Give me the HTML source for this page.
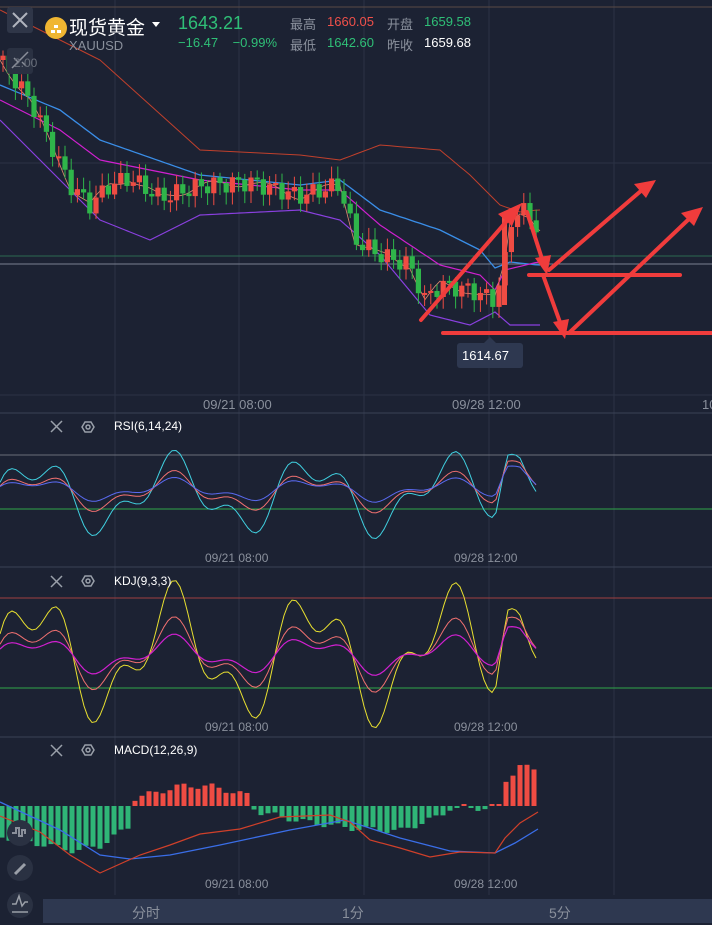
<!DOCTYPE html>
<html><head><meta charset="utf-8">
<style>
*{margin:0;padding:0;box-sizing:border-box}
body{width:712px;height:925px;background:#1c2233;overflow:hidden;position:relative;font-family:"Liberation Sans","Noto Sans CJK SC",sans-serif}
svg{position:absolute;left:0;top:0}
.t{position:absolute;white-space:nowrap}
</style></head><body>
<svg id="s" width="712" height="925" viewBox="0 0 712 925">
<rect width="712" height="925" fill="#1c2233"/>
<g stroke="#2b3245" stroke-width="1">
<line x1="115" y1="0" x2="115" y2="895"/><line x1="239" y1="0" x2="239" y2="895"/>
<line x1="364" y1="0" x2="364" y2="895"/><line x1="489" y1="0" x2="489" y2="895"/>
<line x1="614" y1="0" x2="614" y2="895"/>
<line x1="0" y1="7" x2="712" y2="7" stroke="#5a4a45"/>
<line x1="0" y1="163" x2="712" y2="163"/>
<line x1="0" y1="395" x2="712" y2="395"/>
<line x1="0" y1="413" x2="712" y2="413" stroke="#3a4256"/>
<line x1="0" y1="567" x2="712" y2="567" stroke="#3a4256"/>
<line x1="0" y1="737" x2="712" y2="737" stroke="#3a4256"/>
</g>
<line x1="0" y1="256" x2="712" y2="256" stroke="#2d6a52"/>
<line x1="0" y1="264" x2="712" y2="264" stroke="#7a8090"/>
<line x1="0" y1="455" x2="712" y2="455" stroke="#6a6e7a"/>
<line x1="0" y1="509" x2="712" y2="509" stroke="#2fa54a"/>
<line x1="0" y1="598" x2="712" y2="598" stroke="#a04040"/>
<line x1="0" y1="688" x2="712" y2="688" stroke="#2fa54a"/>
<g id="dyn"></g>
<g stroke="#f03c3c" stroke-width="4" fill="#f03c3c" stroke-linecap="round">
<line x1="421" y1="320" x2="512" y2="215"/><polygon points="522,203 498,214 512,226" stroke="none"/>
<line x1="527" y1="212" x2="543" y2="262"/><polygon points="547,275 535,258 551,255" stroke="none"/>
<line x1="549" y1="270" x2="642" y2="190"/><polygon points="656,180 634,184 646,198" stroke="none"/>
<line x1="529" y1="275" x2="680" y2="275"/>
<line x1="543" y1="275" x2="561" y2="325"/><polygon points="565,339 553,322 569,319" stroke="none"/>
<line x1="443" y1="333" x2="712" y2="333"/>
<line x1="569" y1="333" x2="690" y2="218"/><polygon points="703,207 681,213 694,226" stroke="none"/>
</g>
<rect x="457" y="343" width="66" height="25" rx="3" fill="#2e3850"/>
<polygon points="484,343 490,337 496,343" fill="#2e3850"/>
<rect x="7" y="7" width="26" height="26" rx="3" fill="#2f3648"/>
<path d="M13 13L27 27M27 13L13 27" stroke="#b0b4bd" stroke-width="2"/>
<rect x="7" y="48" width="26" height="26" rx="3" fill="#2a3142"/>
<path d="M12 68L28 52M14 58l4 4M22 62l4 4" stroke="#8a8f9a" stroke-width="1.5"/>
<circle cx="20" cy="833" r="13" fill="#2a3142"/><circle cx="20" cy="868" r="13" fill="#2a3142"/><circle cx="20" cy="905" r="13" fill="#2a3142"/>
<path d="M12 833h4v-5h3v8h3v-6h3v4" stroke="#8a8f9a" stroke-width="2" fill="none"/>
<path d="M15 874l10-10" stroke="#9a9fa8" stroke-width="3"/>
<path d="M12 904l4 0l3-8l3 10l3-4h3M12 912h16" stroke="#9a9fa8" stroke-width="1.5" fill="none"/>
<rect x="43" y="899" width="669" height="24" fill="#2e3850"/>
<g stroke="#9aa0aa" stroke-width="1.5" fill="none">
<path d="M51 421l11 11M62 421l-11 11"/><path d="M51 576l11 11M62 576l-11 11"/><path d="M51 745l11 11M62 745l-11 11"/>
<polygon points="82,427 85,422 91,422 94,427 91,432 85,432"/><circle cx="88" cy="427" r="2"/>
<polygon points="82,581 85,576 91,576 94,581 91,586 85,586"/><circle cx="88" cy="581" r="2"/>
<polygon points="82,750 85,745 91,745 94,750 91,755 85,755"/><circle cx="88" cy="750" r="2"/>
</g>
<circle cx="56" cy="28" r="11" fill="#f0b632"/>
<path d="M51 30h4v3h-4zM57 30h4v3h-4zM54 25h4v3h-4z" fill="#fff"/>
<polygon points="152,22 160,22 156,27" fill="#fff"/>
</svg>
<div class="t" style="left:69px;top:13px;font-size:19px;color:#fff">现货黄金</div>
<div class="t" style="left:69px;top:38px;font-size:13px;color:#8a909c">XAUUSD</div>
<div class="t" style="left:178px;top:13px;font-size:18px;color:#2fbf77">1643.21</div>
<div class="t" style="left:178px;top:35px;font-size:13px;color:#2fbf77">−16.47 &nbsp;&nbsp; −0.99%</div>
<div class="t" style="left:290px;top:14px;font-size:13px;color:#8a909c">最高</div>
<div class="t" style="left:327px;top:14px;font-size:13px;color:#f0504a">1660.05</div>
<div class="t" style="left:387px;top:14px;font-size:13px;color:#8a909c">开盘</div>
<div class="t" style="left:424px;top:14px;font-size:13px;color:#2fbf77">1659.58</div>
<div class="t" style="left:290px;top:35px;font-size:13px;color:#8a909c">最低</div>
<div class="t" style="left:327px;top:35px;font-size:13px;color:#2fbf77">1642.60</div>
<div class="t" style="left:387px;top:35px;font-size:13px;color:#8a909c">昨收</div>
<div class="t" style="left:424px;top:35px;font-size:13px;color:#fff">1659.68</div>
<div class="t" style="left:14px;top:56px;font-size:12px;color:#6a707c">2.00</div>
<div class="t" style="left:462px;top:348px;font-size:13px;color:#fff">1614.67</div>
<div class="t" style="left:203px;top:397px;font-size:13px;color:#8a909c">09/21 08:00</div>
<div class="t" style="left:452px;top:397px;font-size:13px;color:#8a909c">09/28 12:00</div>
<div class="t" style="left:702px;top:397px;font-size:13px;color:#8a909c">10</div>
<div class="t" style="left:114px;top:419px;font-size:12px;color:#fff">RSI(6,14,24)</div>
<div class="t" style="left:205px;top:551px;font-size:12px;color:#8a909c">09/21 08:00</div>
<div class="t" style="left:454px;top:551px;font-size:12px;color:#8a909c">09/28 12:00</div>
<div class="t" style="left:114px;top:574px;font-size:12px;color:#fff">KDJ(9,3,3)</div>
<div class="t" style="left:205px;top:720px;font-size:12px;color:#8a909c">09/21 08:00</div>
<div class="t" style="left:454px;top:720px;font-size:12px;color:#8a909c">09/28 12:00</div>
<div class="t" style="left:114px;top:743px;font-size:12px;color:#fff">MACD(12,26,9)</div>
<div class="t" style="left:205px;top:877px;font-size:12px;color:#8a909c">09/21 08:00</div>
<div class="t" style="left:454px;top:877px;font-size:12px;color:#8a909c">09/28 12:00</div>
<div class="t" style="left:132px;top:903px;font-size:14px;color:#8a909c">分时</div>
<div class="t" style="left:342px;top:903px;font-size:14px;color:#8a909c">1分</div>
<div class="t" style="left:549px;top:903px;font-size:14px;color:#8a909c">5分</div>
<script>
(function(){
var g=document.getElementById('dyn'),h='';
function interp(pts,x){for(var i=0;i<pts.length-1;i++){if(x>=pts[i][0]&&x<=pts[i+1][0]){var t=(x-pts[i][0])/(pts[i+1][0]-pts[i][0]);return pts[i][1]+t*(pts[i+1][1]-pts[i][1]);}}return pts[pts.length-1][1];}
var P=[[0,60],[30,100],[70,185],[90,205],[110,185],[130,178],[160,198],[200,186],[250,182],[300,196],[340,185],[355,240],[380,255],[410,265],[425,300],[440,285],[470,290],[495,300],[505,262],[510,222],[520,210],[530,215],[538,232]];
function pl(pts,f,c,w){var s='';for(var x=0;x<=540;x+=5){s+=x+','+(interp(pts,x)+(f?f(x):0)).toFixed(1)+' ';}return '<polyline points="'+s+'" fill="none" stroke="'+c+'" stroke-width="'+(w||1.2)+'"/>';}
h+=pl([[0,10],[100,60],[200,150],[300,155],[340,160],[380,145],[440,150],[470,175],[500,205],[520,212],[538,210]],null,'#c0402c',1);
h+=pl([[0,85],[60,110],[100,140],[200,175],[300,185],[340,180],[380,210],[440,230],[480,250],[495,268],[510,262],[538,265]],null,'#3a8ee8',1.3);
h+=pl([[0,100],[60,130],[100,160],[200,180],[300,190],[340,190],[380,225],[440,265],[480,275],[495,290],[505,270],[538,262]],null,'#d020d0',1.2);
h+=pl([[0,120],[60,180],[100,220],[150,240],[200,215],[300,210],[340,220],[380,255],[430,315],[470,325],[495,312],[510,325],[538,325]],null,'#8a40e0',1.2);
h+=pl(P,function(x){return Math.sin(x/9)*4},'#e08a70',0.8);
var prev=interp(P,0);
for(var x=3;x<=538;x+=6.2){var c=interp(P,x)+Math.sin(x*1.7)*9,o=prev;prev=c;var up=c<o,col=up?'#ef4c43':'#2fb54a';var top=Math.min(o,c),bh=Math.max(Math.abs(o-c),2);
h+='<line x1="'+x+'" y1="'+(top-4-Math.abs(Math.sin(x))*8)+'" x2="'+x+'" y2="'+(top+bh+4+Math.abs(Math.cos(x))*8)+'" stroke="'+col+'"/><rect x="'+(x-2.6)+'" y="'+top+'" width="5.2" height="'+bh+'" fill="'+col+'"/>';}
h+='<rect x="502" y="215" width="5" height="90" fill="#ef4c43"/>';
function osc(base,amp,spike,c,w,sc){var s='';for(var x=0;x<=538;x+=4){var v=base-amp*(Math.sin(x/22)+0.5*Math.sin(x/9+1))*sc;if(x>495)v-=spike*Math.min(1,(x-495)/12)-(x>520?(x-520)*1.2*sc:0);s+=x+','+v.toFixed(1)+' ';}return '<polyline points="'+s+'" fill="none" stroke="'+c+'" stroke-width="'+(w||1)+'"/>';}
h+=osc(495,30,55,'#40d0e0',1,1)+osc(492,18,38,'#f07070',1,0.8)+osc(490,12,28,'#5a6af0',1,0.7);
h+=osc(655,50,70,'#e8e030',1,1)+osc(655,32,50,'#f07070',1,0.8)+osc(655,20,35,'#d020d0',1.2,0.7);
var hb=[[0,30],[40,38],[75,45],[100,40],[130,20],[135,-8],[180,-20],[210,-20],[250,-10],[255,5],[300,15],[350,22],[400,25],[440,10],[450,2],[500,2],[505,-25],[520,-40],[540,-35]];
for(var x=2;x<=540;x+=7){var v=interp(hb,x)+Math.sin(x/5)*3;if(Math.abs(v)<2)v=v<0?-2:2;var col=v<0?'#ef4c43':'#2fb577';h+='<rect x="'+(x-2.5)+'" y="'+(v<0?806+v:806)+'" width="5" height="'+Math.abs(v)+'" fill="'+col+'"/>';}
h+='<polyline fill="none" stroke="#3a6ee8" stroke-width="1.3" points="0,802 60,830 100,855 130,859 170,855 220,845 290,830 345,820 400,838 450,851 495,853 515,843 538,829"/>';
h+='<polyline fill="none" stroke="#d0402a" stroke-width="1.2" points="0,816 40,832 70,855 100,873 140,855 170,845 200,834 240,829 280,817 330,815 350,822 370,840 400,848 430,857 460,852 495,853 505,838 520,823 538,812"/>';
g.innerHTML=h;})();
</script>
</body></html>
